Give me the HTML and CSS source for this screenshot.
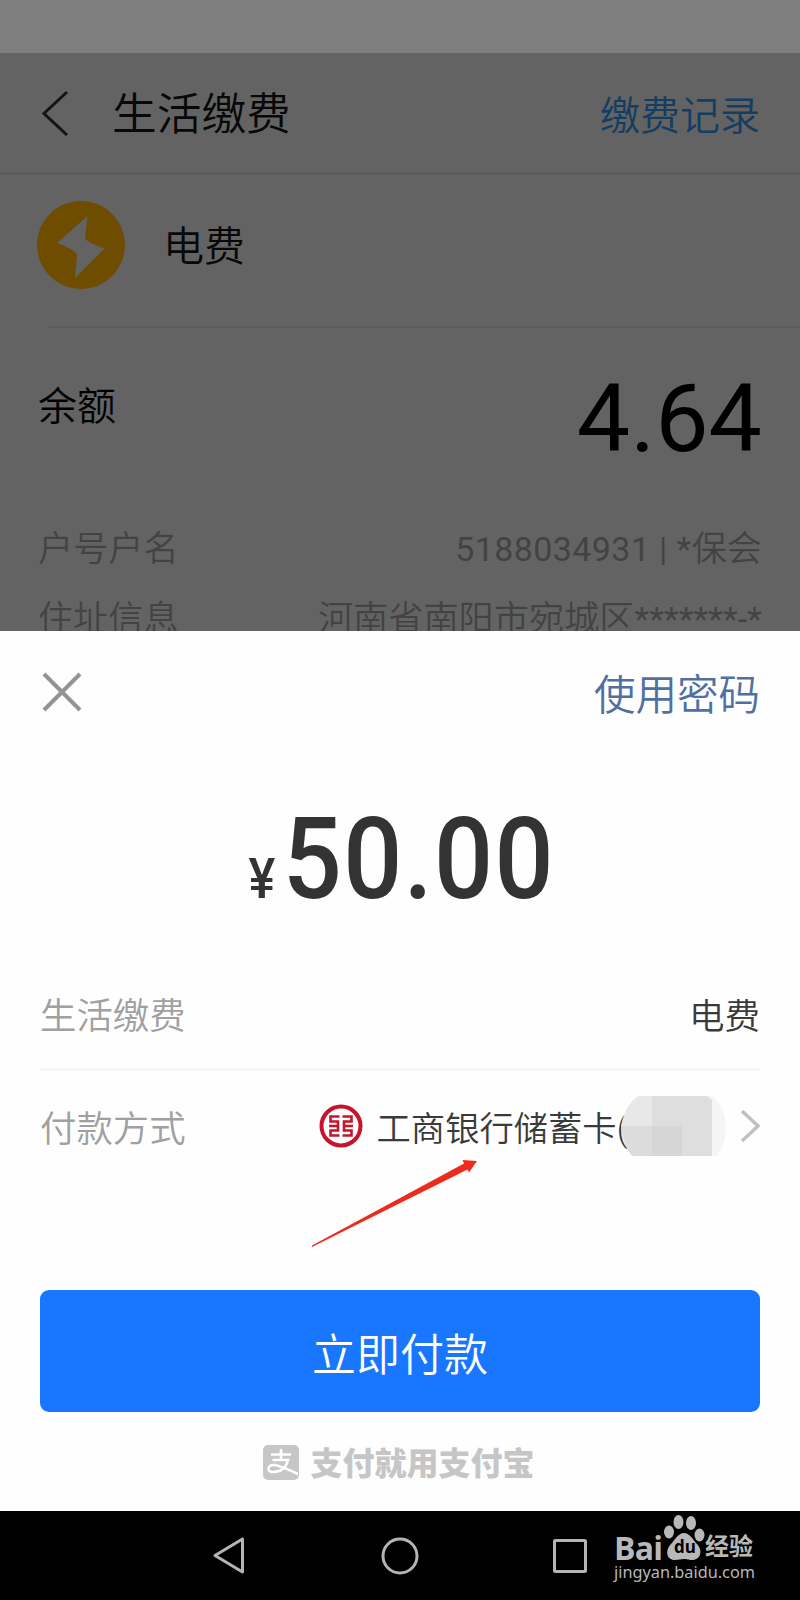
FILE: index.html
```html
<!DOCTYPE html>
<html lang="zh-CN">
<head>
<meta charset="utf-8">
<title>生活缴费</title>
<link rel="stylesheet" href="styles.css">
</head>
<body>

<div class="page">
    <div class="status"></div>
    <div class="header">
        <svg class="back" width="28" height="46" viewBox="0 0 28 46"><path d="M26 2L3 23.500L26 45" /></svg>
        <h1>生活缴费</h1>
        <a class="record">缴费记录</a>
    </div>
    <div class="type">
        <svg width="88" height="88" viewBox="0 0 88 88">
            <circle cx="44" cy="44" r="44" fill="#6e4d00" />
            <path d="M50.500 15L20 42Q39 49 40 54L38 77L67.500 47.500Q49 41 48 37Z" fill="#636363" />
        </svg>
        <span>电费</span>
    </div>
    <div class="balance">
        <span class="balance-name">余额</span>
        <span class="balance-num">4.64</span>
    </div>
    <div class="info"><span>户号户名</span><span><b>5188034931 | *</b>保会</span></div>
    <div class="info"><span>住址信息</span><span>河南省南阳市宛城区<b class="stars">*******-*</b></span></div>
</div>

<div class="sheet">
    <div class="sheet-top">
        <svg width="40" height="40" viewBox="0 0 40 40"><path d="M2 2L38 38M38 2L2 38" /></svg>
        <a>使用密码</a>
    </div>
    <div class="amount"><span class="yen">¥</span><span class="num">50.00</span></div>
    <div class="row row-name"><span class="label">生活缴费</span><span class="value">电费</span></div>
    <div class="row row-pay">
        <span class="label">付款方式</span>
        <svg class="icbc" width="44" height="44" viewBox="0 0 44 44">
            <circle cx="22" cy="22" r="19.500" />
            <path d="M20.500 12.500H11.500V17.500H19V26.500H11.500V31.500H20.500M10 22H19M23.500 12.500H32.500V17.500H25V26.500H32.500V31.500H23.500M25 22H34" />
        </svg>
        <span class="value card">工商银行储蓄卡(</span>
        <svg class="mosaic" width="105" height="60" viewBox="0 0 105 60">
            <path d="M76 0H91Q105 12 105 32Q105 48 96 60H76Z" fill="#f5f5f5" />
            <path d="M0 30Q4 9 17 0H32V30Z" fill="#e8e8e8" />
            <path d="M31 0H86L91 4V60H31Z" fill="#dedede" />
            <path d="M0 30H31V60H11Q2 50 0 30Z" fill="#dcdcdc" />
            <path d="M31 30H61V60H31Z" fill="#d6d6d6" />
        </svg>
        <svg class="more" width="21" height="34" viewBox="0 0 21 34"><path d="M2 2L18 17L2 32" /></svg>
    </div>
    <svg class="arrow" width="166" height="90" viewBox="0 0 166 90"><path d="M0 86.500L152 4.500L150.500 1L165 2L157 13.500L155.500 10.500L0 88Z" /></svg>
    <div class="btn">立即付款</div>
    <div class="slogan">
        <svg width="36" height="35" viewBox="0 0 36 35">
            <rect width="36" height="35" rx="5" fill="#c6c6c6" />
            <path d="M8 9.500H28M18 4V15M9.500 15H25Q22 27 10 27Q5.500 27 5.500 23.500Q6 19.500 12 20Q18 21 35 29" fill="none" stroke="#fff" stroke-width="2.600" />
        </svg>
        <span>支付就用支付宝</span>
    </div>
</div>

<div class="nav">
    <svg width="36" height="40" viewBox="0 0 36 40"><path d="M31.500 3V36L4 19.500Z" /></svg>
    <svg width="38" height="38" viewBox="0 0 38 38"><circle cx="19" cy="19" r="17" /></svg>
    <svg width="36" height="36" viewBox="0 0 36 36"><rect x="1.500" y="2.500" width="31" height="31" rx="1" /></svg>
    <div class="mark">
        <div class="mark-top">
            <span class="bai">Bai</span>
            <span class="paw">
                <svg width="42" height="46" viewBox="0 0 42 46">
                    <ellipse cx="6" cy="17" rx="5" ry="6.500" />
                    <ellipse cx="15.500" cy="7" rx="5" ry="7" />
                    <ellipse cx="28" cy="8" rx="5" ry="7" />
                    <ellipse cx="36.500" cy="20" rx="5" ry="6.500" />
                    <path d="M21 18C27 18 30 25 34 29C40 35 38 45 29 45C25 45 24 44 21 44C18 44 16 45 12 45C3 45 2 35 8 29C12 25 15 18 21 18Z" />
                </svg>
                <i>du</i>
            </span>
            <span class="jy">经验</span>
        </div>
        <div class="mark-url">jingyan.baidu.com</div>
    </div>
</div>

</body>
</html>
```

FILE: styles.css
```css
body,h1{margin:0;padding:0;}
body{width:800px;height:1600px;overflow:hidden;background:#fff;font-family:Roboto,"Noto Sans CJK SC",sans-serif;font-weight:350;}
svg{display:block;flex:none;}
b,i{font-weight:400;font-style:normal;}

/* 背景页 */
.page{height:631px;overflow:hidden;background:#636363;color:#080808;}
.status{height:53px;background:#7e7e7e;}
.header{display:flex;align-items:center;height:119px;padding:0 40px 0 41px;border-bottom:3px solid #5b5b5b;}
.header h1{flex:1;margin-left:43px;padding-top:5px;font-size:44.700px;line-height:60px;font-weight:350;}
.back{fill:none;stroke:#141414;stroke-width:3;}
.record{font-size:40px;line-height:60px;color:#153d62;padding-top:9px;}
.type{display:flex;align-items:center;box-sizing:border-box;height:151px;margin-left:37px;padding-bottom:12px;}
.type span{margin-left:38px;padding-bottom:3px;font-size:41px;}
.balance{display:flex;justify-content:space-between;height:180px;margin:0 0 0 48px;padding-right:38px;border-top:2px solid #5d5d5b;}
.balance-name{margin-left:-10px;font-size:39px;line-height:56px;padding-top:51px;color:#000;}
.balance-num{font-size:95px;line-height:112px;font-weight:400;padding-top:35px;color:#000;}
.info{display:flex;justify-content:space-between;height:70px;margin:0 38px;font-size:35.200px;line-height:82px;color:#434343;}
.info b{font-size:34px;letter-spacing:.4px;}
.info .stars{letter-spacing:.1px;}

/* 付款弹层 */
.sheet{box-sizing:border-box;height:880px;padding:0 40px;background:#fefefe;color:#3a3a3a;}
.sheet-top{display:flex;justify-content:space-between;align-items:center;height:122px;}
.sheet-top svg{margin-left:2px;fill:none;stroke:#939393;stroke-width:4;}
.sheet-top a{font-size:41.500px;color:#5070a2;}
.amount{display:flex;justify-content:center;align-items:baseline;box-sizing:border-box;height:205px;padding-top:4px;line-height:205px;font-weight:500;color:#333;}
.yen{font-size:56px;transform:scaleX(.9);margin-right:-6px;}
.num{font-size:113px;letter-spacing:1.500px;transform:scaleX(.92);margin-right:-14px;}
.row{display:flex;align-items:center;font-size:36.400px;white-space:nowrap;}
.label{color:#a0a0a0;}
.row-name{justify-content:space-between;height:110px;border-bottom:3px solid #f5f5f5;}
.row-name .value{font-size:35.500px;}
.row-pay{height:110px;}
.row-pay .label{width:146px;}
.icbc{margin-left:133px;}
.icbc circle{fill:none;stroke:#c5142c;stroke-width:4;}
.icbc path{fill:none;stroke:#c5142c;stroke-width:2.600;}
.card{margin-left:14px;font-size:34.300px;width:244px;}
.mosaic{position:relative;z-index:1;}
.more{margin-left:14px;fill:none;stroke:#c0c0c0;stroke-width:3.500;}
.arrow{margin:-22px 0 0 272px;fill:#ee2a1c;}
.btn{height:122px;margin-top:41px;border-radius:9px;background:#1876ff;color:#fff;font-size:44px;line-height:132px;text-align:center;}
.slogan{display:flex;justify-content:center;align-items:center;height:100px;font-size:32px;font-weight:900;color:#c6c6c6;}
.slogan span{margin:0 2px 2px 11px;}

/* 系统导航栏 */
.nav{position:relative;display:flex;align-items:center;height:89px;padding-left:211px;background:#000;gap:134px;fill:none;stroke:#b4b4b4;stroke-width:3;stroke-linejoin:round;}
.mark{position:absolute;left:614px;top:2px;color:#b8b8b8;stroke:none;}
.mark-top{display:flex;height:48px;align-items:flex-end;}
.bai{font:bold 32px/26px "Open Sans","Noto Sans",sans-serif;width:49px;letter-spacing:-.8px;}
.paw{position:relative;width:42px;fill:#b8b8b8;}
.paw i{position:absolute;left:11px;top:20px;font:bold 17px/24px "Open Sans",sans-serif;color:#000;}
.jy{font-size:24px;line-height:27px;font-weight:700;}
.mark-url{font:16.300px/23px "Noto Sans",sans-serif;}
```
